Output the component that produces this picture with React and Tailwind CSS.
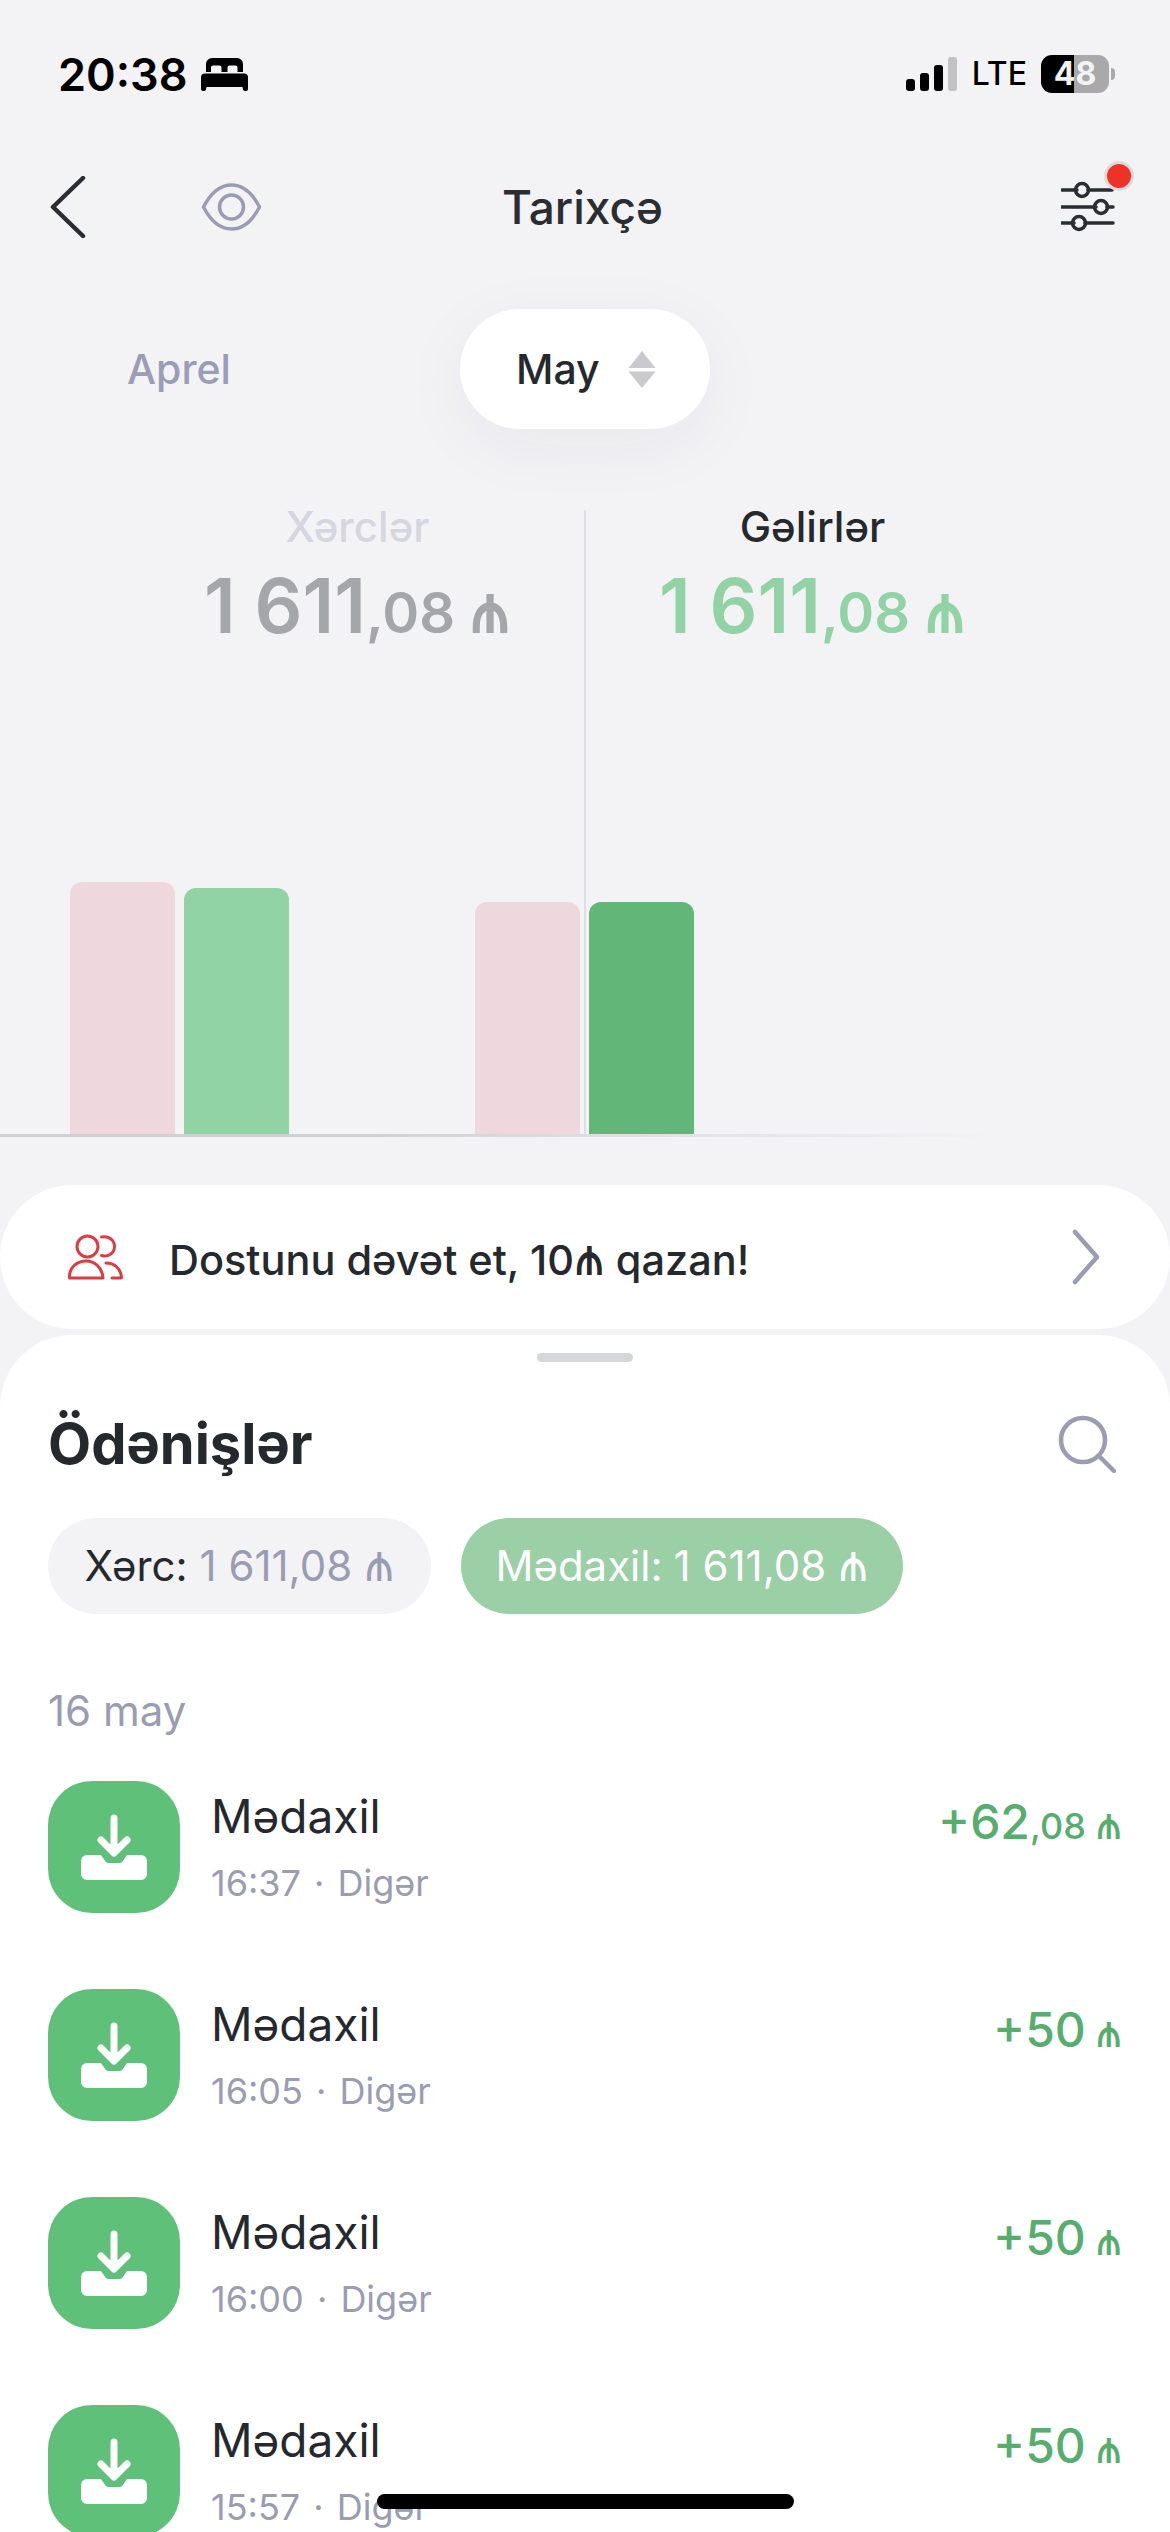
import React from 'react';

// Inter's manat sign is x-height, the reference one is cap height
function Manat() {
  return <span className="inline-block origin-[50%_86%] scale-y-[1.27] leading-none">₼</span>;
}

function Money({ whole, cents, className, mainSize, smallSize }) {
  return (
    <span className={`whitespace-nowrap ${className}`}>
      <span className={mainSize}>{whole}</span>
      <span className={smallSize}>
        {cents} <Manat />
      </span>
    </span>
  );
}

function BedIcon() {
  return (
    <svg width="47" height="33" viewBox="0 0 47 33" fill="#000">
      <path d="M5 14V6a6 6 0 0 1 6-6h25a6 6 0 0 1 6 6v8h-5.500V9.500a2 2 0 0 0-2-2h-6a2 2 0 0 0-2 2V14h-6V9.500a2 2 0 0 0-2-2h-6.500a2 2 0 0 0-2 2V14z" />
      <path d="M4 15.500h39a4 4 0 0 1 4 4V31a2 2 0 0 1-2 2h-1a2 2 0 0 1-2-1.500L41.500 29h-36L5 31.500A2 2 0 0 1 3 33H2a2 2 0 0 1-2-2V19.500a4 4 0 0 1 4-4z" />
    </svg>
  );
}

function SignalIcon() {
  return (
    <svg width="51" height="34" viewBox="0 0 51 34">
      <rect x="0" y="22" width="9" height="12" rx="3" fill="#000" />
      <rect x="14" y="16" width="9" height="18" rx="3" fill="#000" />
      <rect x="28" y="8" width="9" height="26" rx="3" fill="#000" />
      <rect x="42" y="0" width="9" height="34" rx="3" fill="#c2c2c5" />
    </svg>
  );
}

function EyeIcon() {
  return (
    <svg width="61" height="48" viewBox="0 0 61 48" fill="none" stroke="#9a9db2" strokeWidth="3.500">
      <path d="M2.500 24C10 9.500 20 2 30.500 2S51 9.500 58.500 24C51 38.500 41 46 30.500 46S10 38.500 2.500 24z" strokeLinejoin="round" />
      <circle cx="30.500" cy="24" r="12" />
    </svg>
  );
}

function FilterIcon() {
  return (
    <svg width="54" height="52" viewBox="0 0 54 52" fill="none" stroke="#2a2d31" strokeWidth="3.500" strokeLinecap="round">
      <path d="M1 9h15M27 9h24M1 26h34M46 26h6M1 42h12M24 42h28" />
      <circle cx="21" cy="9" r="6.500" />
      <circle cx="40" cy="26" r="6.500" />
      <circle cx="18" cy="42" r="6.500" />
    </svg>
  );
}

function SortArrows() {
  return (
    <svg width="28" height="37" viewBox="0 0 28 37" fill="#c9c9ce">
      <path d="M14 0l13.500 17H.5z" strokeLinejoin="round" />
      <path d="M14 37L.5 20.500h27z" strokeLinejoin="round" />
    </svg>
  );
}

function PeopleIcon() {
  return (
    <svg width="56" height="46" viewBox="0 0 56 46" fill="none" stroke="#dc3d45" strokeWidth="3" strokeLinecap="round" strokeLinejoin="round">
      <circle cx="19.500" cy="12.500" r="10.500" />
      <path d="M1.500 44v-1.500C1.500 33 9.500 27 18 27s16 6 17 17H1.500z" />
      <path d="M33.500 3c7-1.500 13 3 13 9.500S40 23.500 33.500 21.500" />
      <path d="M38 29c8 0 15 5 15.500 15H44" />
    </svg>
  );
}

function InboxIcon() {
  return (
    <svg width="66" height="66" viewBox="0 0 66 66" fill="none">
      <path d="M33 4v34M20 26l13 13 13-13" stroke="#fff" strokeWidth="7" strokeLinecap="round" strokeLinejoin="round" />
      <path d="M6 41h14l4.500 6.500a3 3 0 0 0 2.500 1.500h12a3 3 0 0 0 2.500-1.500L46 41h14a6 6 0 0 1 6 6v13a6 6 0 0 1-6 6H6a6 6 0 0 1-6-6V47a6 6 0 0 1 6-6z" fill="#fff" />
    </svg>
  );
}

const rows = [
  { time: '16:37', whole: '+62', cents: ',08' },
  { time: '16:05', whole: '+50', cents: '' },
  { time: '16:00', whole: '+50', cents: '' },
  { time: '15:57', whole: '+50', cents: '' },
];

function Row({ time, whole, cents }) {
  return (
    <div className="flex h-[208px] shrink-0 items-start">
      <div className="flex h-[132px] w-[132px] shrink-0 items-center justify-center rounded-[44px] bg-[#5fc07a]">
        <InboxIcon />
      </div>
      <div className="ml-[31px] flex-1">
        <div className="mt-[7px] text-[46px] leading-[56px] text-[#25282c]">Mədaxil</div>
        <div className="mt-[17px] text-[36px] leading-[44px] text-[#9a9cb2]">
          {time} <span className="mx-[3px]">·</span> Digər
        </div>
      </div>
      <div className="mt-[9px] leading-[64px]">
        <Money
          whole={whole}
          cents={cents}
          className="font-medium text-[#55ae6e]"
          mainSize="text-[48px]"
          smallSize="text-[36px]"
        />
      </div>
    </div>
  );
}

export default function App() {
  return (
    <div className="relative h-[2532px] w-[1170px] overflow-hidden bg-[#f3f3f6] font-['Inter',sans-serif]">
      {/* status bar */}
      <div className="flex h-[148px] items-center justify-between pl-[58px] pr-[55px]">
        <div className="flex items-center gap-[13px]">
          <span className="text-[45px] font-semibold leading-none text-black">20:38</span>
          <BedIcon />
        </div>
        <div className="flex items-center">
          <SignalIcon />
          <span className="ml-[15px] text-[32px] font-medium leading-none text-black">LTE</span>
          <div className="ml-[14px] flex h-[38px] w-[68px] items-center justify-center rounded-[11px] bg-[linear-gradient(90deg,#000_48%,#a9a9ab_48%)] text-[32px] font-bold leading-none text-[#f3f3f3]">
            48
          </div>
          <div className="ml-[2px] h-[12px] w-[4px] rounded-r-full bg-[#a9a9ab]" />
        </div>
      </div>

      {/* nav */}
      <div className="relative flex h-[118px] items-center pl-[50px] pr-[55px]">
        <svg width="36" height="62" viewBox="0 0 36 62" fill="none" stroke="#2a2d31" strokeWidth="4.500" strokeLinecap="round" strokeLinejoin="round">
          <path d="M33 2L3 31l30 29" />
        </svg>
        <div className="ml-[115px]">
          <EyeIcon />
        </div>
        <div className="flex-1 pr-[158px] text-center text-[46px] font-medium leading-none text-[#2a2d31]">Tarixçə</div>
        <div className="relative">
          <FilterIcon />
          <div className="absolute right-[-19px] top-[-20px] h-[30px] w-[30px] rounded-full border-[3px] border-[#dcdce0] bg-[#ee3226]" />
        </div>
      </div>

      {/* months */}
      <div className="mt-[43px] flex h-[120px] items-center">
        <div className="ml-[127px] w-[333px] text-[41px] font-medium leading-none text-[#9a9cb8]">Aprel</div>
        <div className="flex h-[120px] w-[250px] items-center justify-between rounded-full bg-white pl-[56px] pr-[54px] shadow-[0_16px_70px_rgba(30,30,50,0.05)]">
          <span className="text-[41px] font-medium leading-none text-[#25282c]">May</span>
          <SortArrows />
        </div>
      </div>

      {/* summary and chart */}
      <div className="relative h-[708px]">
        <div className="absolute bottom-[3px] left-[584px] top-[81px] w-[2px] bg-[#dfdfe3]" />
        <div className="grid grid-cols-2 px-[130px] pt-[78px] text-center">
          <div>
            <div className="text-[42px] font-medium leading-[40px] text-[#d6d6e0]">Xərclər</div>
            <div className="mt-[14px] leading-[90px]">
              <Money whole="1 611" cents=",08" className="font-semibold text-[#a5a6a9]" mainSize="text-[75px]" smallSize="text-[56px]" />
            </div>
          </div>
          <div>
            <div className="text-[42px] font-medium leading-[40px] text-[#25282c]">Gəlirlər</div>
            <div className="mt-[14px] leading-[90px]">
              <Money whole="1 611" cents=",08" className="font-semibold text-[#91d3a5]" mainSize="text-[75px]" smallSize="text-[56px]" />
            </div>
          </div>
        </div>
        <div className="absolute inset-x-0 bottom-0">
          <div className="flex items-end gap-[186px] pl-[70px]">
            <div className="flex items-end gap-[9px]">
              <div className="h-[252px] w-[105px] rounded-t-[12px] bg-[#eed8de]" />
              <div className="h-[246px] w-[105px] rounded-t-[12px] bg-[#91d3a5]" />
            </div>
            <div className="flex items-end gap-[9px]">
              <div className="h-[232px] w-[105px] rounded-t-[12px] bg-[#eed8de]" />
              <div className="h-[232px] w-[105px] rounded-t-[12px] bg-[#62b677]" />
            </div>
          </div>
          <div className="h-[3px] w-[1000px] bg-[linear-gradient(90deg,#cfd0d7_0%,#cfd0d7_35%,#f3f3f6_100%)]" />
        </div>
      </div>

      {/* invite */}
      <div className="mt-[48px] flex h-[144px] items-center rounded-[72px] bg-white pl-[68px] pr-[70px]">
        <PeopleIcon />
        <span className="ml-[45px] flex-1 pt-[7px] text-[41.5px] font-medium leading-none text-[#25282c]">
          Dostunu dəvət et, 10<Manat /> qazan!
        </span>
        <svg width="28" height="56" viewBox="0 0 28 56" fill="none" stroke="#9a9db2" strokeWidth="4.500" strokeLinecap="round" strokeLinejoin="round">
          <path d="M3 3l22 25L3 53" />
        </svg>
      </div>

      {/* payments sheet */}
      <div className="mt-[6px] rounded-t-[72px] bg-white px-[48px] pt-[18px]">
        <div className="mx-auto h-[9px] w-[96px] rounded-full bg-[#d5d6da]" />
        <div className="mt-[44px] flex h-[76px] items-center justify-between pr-[6px]">
          <span className="text-[56px] font-bold leading-none text-[#25282c]">Ödənişlər</span>
          <svg width="58" height="58" viewBox="0 0 58 58" fill="none" stroke="#9a9db2" strokeWidth="4.500" strokeLinecap="round">
            <circle cx="25" cy="25" r="22" />
            <path d="M41 41l15 15" />
          </svg>
        </div>
        <div className="mt-[36px] flex gap-[30px]">
          <div className="flex h-[96px] w-[383px] items-center justify-center rounded-full bg-[#f3f3f6] text-[42px] leading-none text-[#25282c]">
            Xərc:&nbsp;
            <span className="text-[#9a9cb2]">
              1 611,08 <Manat />
            </span>
          </div>
          <div className="flex h-[96px] w-[442px] items-center justify-center gap-[11px] rounded-full bg-[#9bcfa5] text-[42px] leading-none text-white">
            <span>Mədaxil:</span>
            <span>
              1 611,08 <Manat />
            </span>
          </div>
        </div>
        <div className="mt-[75px] text-[42px] leading-[44px] text-[#9a9cb2]">16 may</div>
        <div className="mt-[48px] flex flex-col">
          {rows.map((r) => (
            <Row key={r.time} {...r} />
          ))}
        </div>
      </div>

      {/* home indicator */}
      <div className="absolute bottom-[23px] left-[377px] h-[15px] w-[417px] rounded-full bg-black" />
    </div>
  );
}
